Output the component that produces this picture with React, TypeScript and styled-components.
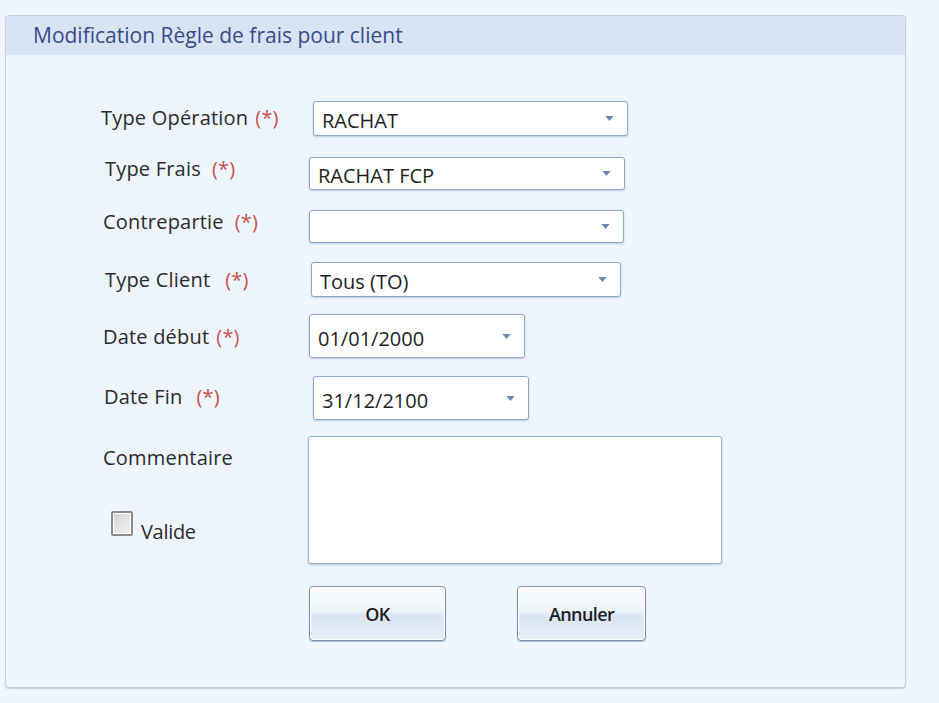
import styled, { createGlobalStyle } from "styled-components";

const GlobalStyle = createGlobalStyle`
  html, body {
    margin: 0;
    padding: 0;
    background: #eef5fd;
    font-family: "Open Sans", "Noto Sans", sans-serif;
    color: #2b2b2b;
  }
`;

type FieldDef = {
  label: string;
  required?: boolean;
  value: string;
  width: number;
  height: number;
  mt: number;
  labelX: number;
  labelY: number;
  boxX: number;
  starGap: number;
};

const fields: FieldDef[] = [
  { label: "Type Opération", required: true, value: "RACHAT", width: 315, height: 35, mt: 46, labelX: 0, labelY: -1, boxX: 4, starGap: 7 },
  { label: "Type Frais", required: true, value: "RACHAT FCP", width: 316, height: 33, mt: 21, labelX: 4, labelY: -5, boxX: 0, starGap: 11 },
  { label: "Contrepartie", required: true, value: "", width: 315, height: 33, mt: 20, labelX: 2, labelY: -5, boxX: 0, starGap: 11 },
  { label: "Type Client", required: true, value: "Tous (TO)", width: 310, height: 35, mt: 19, labelX: 4, labelY: 0, boxX: 2, starGap: 15 },
  { label: "Date début", required: true, value: "01/01/2000", width: 216, height: 44, mt: 17, labelX: 2, labelY: 0, boxX: 0, starGap: 7 },
  { label: "Date Fin", required: true, value: "31/12/2100", width: 216, height: 44, mt: 18, labelX: 3, labelY: -2, boxX: 4, starGap: 14 },
];

export default function App() {
  return (
    <>
      <GlobalStyle />
      <Page>
        <Panel>
          <Header>Modification Règle de frais pour client</Header>
          <Body>
            {fields.map((f) => (
              <Row key={f.label} $mt={f.mt} $h={f.height}>
                <Label $x={f.labelX} $y={f.labelY}>
                  {f.label}
                  {f.required && <Star $gap={f.starGap}>(*)</Star>}
                </Label>
                <Select $w={f.width} $x={f.boxX}>
                  <SelectValue>{f.value}</SelectValue>
                  <Arrow viewBox="0 0 10 6">
                    <path d="M0 0 L10 0 L5 6 Z" fill="#6a87b6" />
                  </Arrow>
                </Select>
              </Row>
            ))}
            <CommentRow>
              <CommentSide>
                <Label $x={2} $y={0}>Commentaire</Label>
                <CheckLine>
                  <CheckBox />
                  <CheckText>Valide</CheckText>
                </CheckLine>
              </CommentSide>
              <TextArea />
            </CommentRow>
            <Buttons>
              <Button $w={137}>OK</Button>
              <Button $w={129}>Annuler</Button>
            </Buttons>
          </Body>
        </Panel>
      </Page>
    </>
  );
}

const Page = styled.div`
  width: 939px;
  height: 703px;
  padding: 15px 0 0 5px;
  box-sizing: border-box;
`;

const Panel = styled.div`
  width: 901px;
  height: 673px;
  box-sizing: border-box;
  border: 1px solid #c3d0de;
  border-radius: 4px;
  background: #eef5fe;
  box-shadow: 0 1px 1px rgba(120, 140, 170, 0.35);
  overflow: hidden;
  display: flex;
  flex-direction: column;
`;

const Header = styled.div`
  height: 39px;
  flex: none;
  background: #d7e4f3;
  color: #3c4a8c;
  font-size: 21px;
  line-height: 39px;
  padding-left: 27px;
  letter-spacing: 0;
`;

const Body = styled.div`
  display: flex;
  flex-direction: column;
  padding-left: 95px;
`;

const Row = styled.div<{ $mt: number; $h: number }>`
  display: grid;
  grid-template-columns: 208px auto;
  align-items: center;
  margin-top: ${(p) => p.$mt}px;
  height: ${(p) => p.$h}px;
`;

const Label = styled.div<{ $x: number; $y: number }>`
  font-size: 20px;
  color: #2b2b2b;
  white-space: nowrap;
  margin-left: ${(p) => p.$x}px;
  transform: translateY(${(p) => p.$y}px);
  letter-spacing: 0.2px;
`;

const Star = styled.span<{ $gap: number }>`
  color: #c8504c;
  margin-left: ${(p) => p.$gap}px;
`;

const Select = styled.div<{ $w: number; $x: number }>`
  width: ${(p) => p.$w}px;
  height: 100%;
  box-sizing: border-box;
  margin-left: ${(p) => p.$x}px;
  background: #fff;
  border: 1px solid #8fa8c9;
  border-radius: 3px;
  box-shadow: 0 1px 2px rgba(120, 150, 190, 0.45);
  display: flex;
  align-items: center;
  padding: 0 13px 0 8px;
`;

const SelectValue = styled.span`
  flex: 1;
  font-size: 20px;
  color: #1e1e1e;
  letter-spacing: 0;
  padding-top: 4px;
`;

const Arrow = styled.svg`
  width: 9px;
  height: 5px;
  flex: none;
`;

const CommentRow = styled.div`
  display: grid;
  grid-template-columns: 207px auto;
  margin-top: 16px;
  height: 128px;
`;

const CommentSide = styled.div`
  display: flex;
  flex-direction: column;
  padding-top: 8px;
`;

const CheckLine = styled.div`
  display: flex;
  align-items: flex-end;
  margin-top: 40px;
  margin-left: 10px;
`;

const CheckBox = styled.div`
  width: 22px;
  height: 25px;
  box-sizing: border-box;
  border: 2px solid #8c8c8c;
  border-radius: 2px;
  background: linear-gradient(135deg, #d3d3d3, #f4f4f4);
  box-shadow: inset 0 0 0 1px #fff;
`;

const CheckText = styled.span`
  font-size: 20px;
  margin-left: 8px;
  margin-bottom: -9px;
  letter-spacing: -0.3px;
`;

const TextArea = styled.div`
  width: 414px;
  height: 128px;
  box-sizing: border-box;
  background: #fff;
  border: 1px solid #98b1d1;
  border-radius: 3px;
  box-shadow: 0 1px 2px rgba(120, 150, 190, 0.45);
`;

const Buttons = styled.div`
  display: flex;
  gap: 71px;
  margin-top: 22px;
  padding-left: 208px;
`;

const Button = styled.button<{ $w: number }>`
  width: ${(p) => p.$w}px;
  height: 55px;
  border: 1px solid #7d8fab;
  border-radius: 4px;
  background: linear-gradient(#fafcfe 0%, #eef3fa 45%, #d9e5f4 55%, #e8eff9 100%);
  box-shadow: 0 1px 1px rgba(90, 110, 140, 0.4), inset 0 0 0 1px #fff;
  font-family: "Open Sans", "Noto Sans", sans-serif;
  font-weight: 600;
  font-size: 18px;
  color: #1e1e1e;
  letter-spacing: -0.6px;
  padding: 0;
`;
